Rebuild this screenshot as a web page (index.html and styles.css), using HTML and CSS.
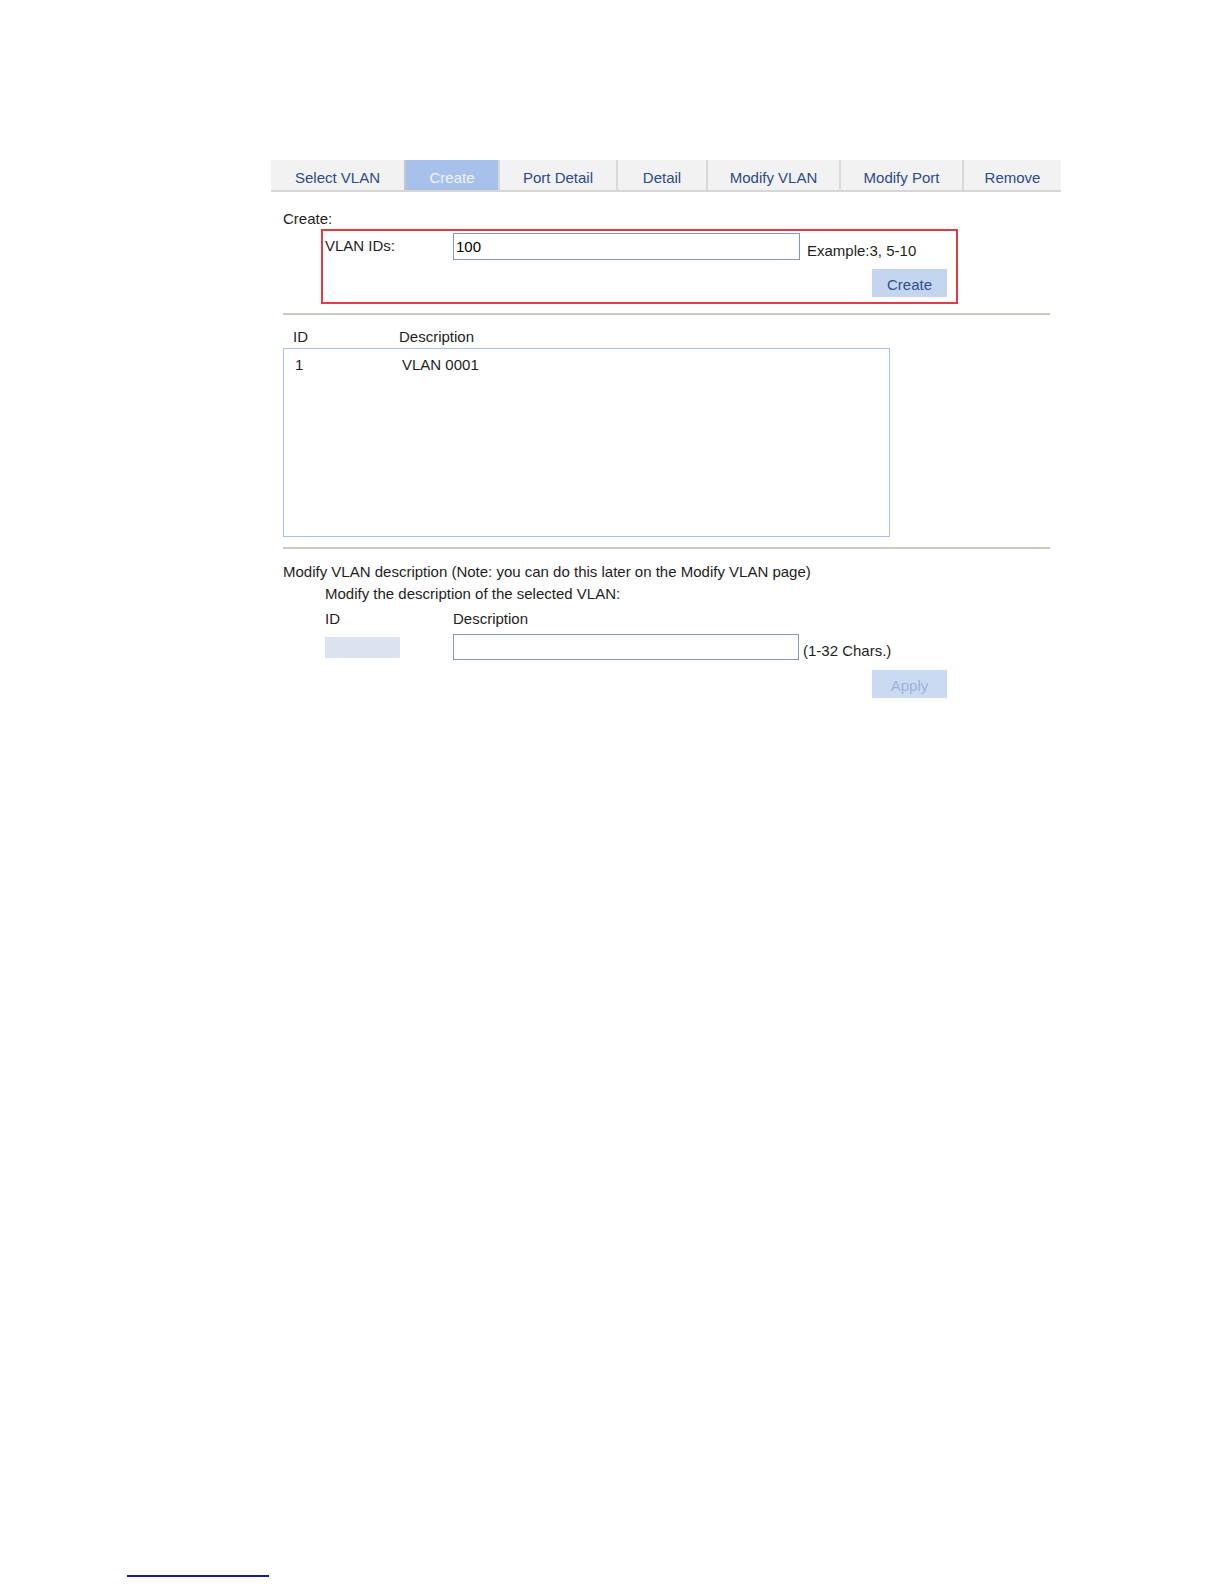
FILE: index.html
```html
<!DOCTYPE html>
<html lang="en">
<head>
<meta charset="utf-8">
<title>VLAN - Create</title>
<link rel="stylesheet" href="styles.css">
</head>
<body>
<div class="page">
  <nav class="tabs">
    <div class="tab t-select">Select VLAN</div>
    <div class="tab t-create active">Create</div>
    <div class="tab t-port">Port Detail</div>
    <div class="tab t-detail">Detail</div>
    <div class="tab t-modvlan">Modify VLAN</div>
    <div class="tab t-modport">Modify Port</div>
    <div class="tab t-remove">Remove</div>
  </nav>
  <div class="content">
    <div class="section-title">Create:</div>
    <div class="create-box">
      <div class="field-row">
        <span class="field-label">VLAN IDs:</span>
        <input class="text-input" type="text" value="100">
        <span class="hint">Example:3, 5-10</span>
      </div>
      <div class="button-row">
        <button class="btn" type="button">Create</button>
      </div>
    </div>
    <div class="divider first"></div>
    <div class="list-head">
      <span class="col-id">ID</span>
      <span class="col-desc">Description</span>
    </div>
    <div class="list-box">
      <div class="list-row">
        <span class="col-id">1</span>
        <span class="col-desc">VLAN 0001</span>
      </div>
    </div>
    <div class="divider second"></div>
    <div class="modify-title">Modify VLAN description (Note: you can do this later on the Modify VLAN page)</div>
    <div class="modify">
      <div class="modify-sub">Modify the description of the selected VLAN:</div>
      <div class="modify-head">
        <span class="field-label">ID</span>
        <span>Description</span>
      </div>
      <div class="modify-row">
        <span class="label-cell"><span class="id-box"></span></span>
        <input class="text-input small" type="text" value="">
        <span class="hint chars">(1-32 Chars.)</span>
      </div>
      <div class="button-row apply-row">
        <button class="btn disabled" type="button">Apply</button>
      </div>
    </div>
  </div>
</div>
<div class="footer-line"></div>
</body>
</html>
```

FILE: styles.css
```css
* { box-sizing: border-box; }

html, body {
  margin: 0;
  padding: 0;
  background: #ffffff;
}

body {
  min-height: 1584px;
  display: flex;
  flex-direction: column;
  font-family: "Liberation Sans", Arial, sans-serif;
  font-size: 15px;
  line-height: 18px;
  color: #1e1e1e;
}

.page {
  margin-left: 271px;
  width: 779px;
  padding-top: 160px;
}

/* Tabs */
.tabs {
  display: flex;
  width: 790px;
  border-bottom: 2px solid #d6d6d6;
}

.tab {
  height: 30px;
  padding-top: 9px;
  text-align: center;
  color: #2e4a8a;
  background: #f2f2f2;
  border-left: 2px solid #d9d9d9;
  white-space: nowrap;
}

.tab.t-select { width: 133px; border-left: none; }
.tab.t-create { width: 94px; }
.tab.t-port { width: 118px; }
.tab.t-detail { width: 90px; }
.tab.t-modvlan { width: 133px; }
.tab.t-modport { width: 123px; }
.tab.t-remove { width: 99px; }

.tab.active {
  background: #a8c1ea;
  color: #eef3fc;
  border-left-color: #c8c8c8;
}

/* Content */
.content {
  padding-left: 12px;
}

.section-title {
  margin-top: 18px;
}

.create-box {
  margin-top: 1px;
  margin-left: 38px;
  width: 637px;
  height: 75px;
  border: 2px solid #e33b45;
  padding: 2px 9px 0 2px;
}

.field-row {
  display: flex;
  align-items: flex-start;
  height: 27px;
}

.field-label {
  width: 128px;
  flex: none;
  margin-top: 4px;
}

.text-input {
  width: 347px;
  height: 27px;
  border: 1px solid #7f9db9;
  padding: 0 2px;
  margin: 0;
  font-family: "Liberation Sans", Arial, sans-serif;
  font-size: 15px;
  color: #000;
  background: #fff;
  outline: none;
}

.text-input.small {
  width: 346px;
  height: 26px;
}

.hint {
  align-self: flex-end;
  margin-left: 7px;
  white-space: nowrap;
}

.hint.chars {
  margin-left: 4px;
}

.button-row {
  display: flex;
  justify-content: flex-end;
  margin-top: 9px;
}

.btn {
  width: 75px;
  height: 28px;
  border: none;
  margin: 0;
  padding: 2px 0 0;
  background: #c4d5f0;
  color: #2f4e8c;
  font-family: "Liberation Sans", Arial, sans-serif;
  font-size: 15px;
}

.btn.disabled {
  background: #cadaf2;
  color: #9db2d8;
}

.divider {
  height: 2px;
  background: #cbcbbd;
}

.divider.first { margin-top: 9px; }
.divider.second { margin-top: 10px; }

/* List */
.list-head {
  display: flex;
  margin-top: 13px;
  padding-left: 10px;
}

.list-head .col-id { width: 106px; }

.list-box {
  margin-top: 2px;
  width: 607px;
  height: 189px;
  border: 1px solid #a6c0e6;
  padding: 7px 0 0 11px;
}

.list-row {
  display: flex;
}

.list-row .col-id { width: 107px; }

/* Modify section */
.modify-title {
  margin-top: 14px;
  white-space: nowrap;
}

.modify {
  margin-left: 42px;
  width: 622px;
}

.modify-sub {
  margin-top: 4px;
}

.modify-head {
  display: flex;
  margin-top: 7px;
}

.modify-head .field-label {
  margin-top: 0;
}

.modify-row {
  display: flex;
  align-items: center;
  height: 26px;
  margin-top: 6px;
}

.label-cell {
  width: 128px;
  flex: none;
  display: flex;
}

.id-box {
  width: 75px;
  height: 21px;
  background: #dce3ef;
}

.apply-row {
  margin-top: 10px;
}

.footer-line {
  margin-top: auto;
  margin-bottom: 7px;
  margin-left: 127px;
  width: 142px;
  height: 2px;
  background: #1c1c82;
}
```
